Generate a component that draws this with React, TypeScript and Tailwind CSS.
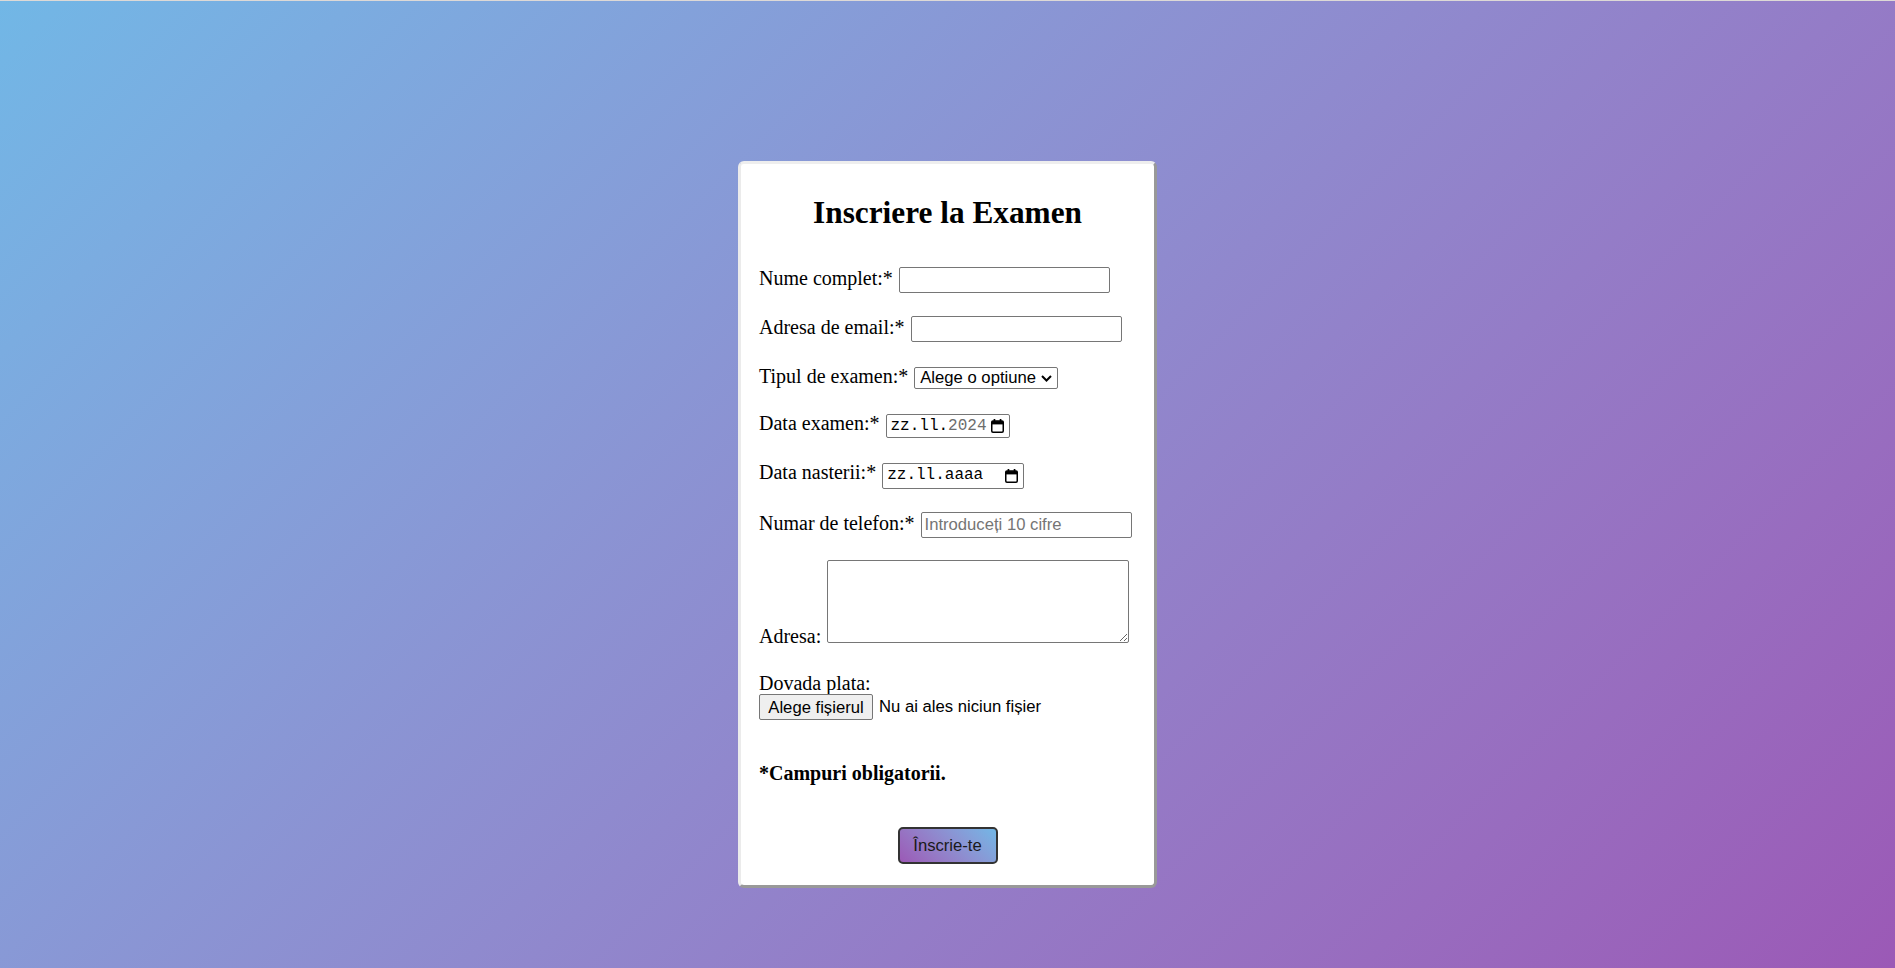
import React from "react";

function CalendarIcon() {
  return (
    <svg width="13" height="14" viewBox="0 0 13 14" className="shrink-0">
      <rect x="2.6" y="0" width="1.7" height="3" fill="#000" />
      <rect x="8.7" y="0" width="1.7" height="3" fill="#000" />
      <rect x="0.75" y="2.1" width="11.5" height="11.15" rx="1.2" fill="none" stroke="#000" strokeWidth="1.5" />
      <rect x="0.75" y="2.1" width="11.5" height="3.3" fill="#000" />
    </svg>
  );
}

function DateField({ year, width, h }: { year?: string; width: string; h: string }) {
  return (
    <div
      className={`inline-flex items-center justify-between rounded-[2px] border border-[#767676] bg-white pl-[4px] pr-[5px] ${width} ${h}`}
    >
      <span className="font-['Liberation_Mono',monospace] text-[16px] leading-[19px] text-black">
        zz.ll.
        {year ? <span className="text-[#6d6d6d]">{year}</span> : "aaaa"}
      </span>
      <CalendarIcon />
    </div>
  );
}

const inputCls =
  "h-[26px] w-[211px] rounded-[2px] border border-[#767676] bg-white px-[3px] font-['Liberation_Sans',Arial,sans-serif] text-[16.67px] text-black outline-none placeholder:text-[#757575]";

export default function App() {
  return (
    <div className="flex min-h-screen w-full justify-center border-t border-[#ddd9d6] bg-linear-135 from-[#71b7e6] to-[#9b59b6] pt-[160px]">
      <div className="h-[727px] w-[419px] rounded-[6px] border-[3px] border-t-[#eeeeee] border-r-[#999999] border-b-[#999999] border-l-[#ebebeb] bg-white px-[18px] font-['Liberation_Serif','Times_New_Roman',serif] text-[20px] text-black">
        <h2 className="mt-[31px] text-center text-[31.3px] leading-[35px] font-bold">
          Inscriere la Examen
        </h2>

        <form onSubmit={(e) => e.preventDefault()}>
          {/* Nume */}
          <div className="mt-[37px] flex items-baseline gap-[6px]">
            <label className="leading-[23px]">Nume complet:*</label>
            <input type="text" className={inputCls} />
          </div>

          {/* Email */}
          <div className="mt-[23px] flex items-baseline gap-[6px]">
            <label className="leading-[23px]">Adresa de email:*</label>
            <input type="email" className={inputCls} />
          </div>

          {/* Tip examen */}
          <div className="mt-[23px] flex items-baseline gap-[6px]">
            <label className="leading-[23px]">Tipul de examen:*</label>
            <div className="relative inline-flex">
              <select className="h-[22px] w-[144px] appearance-none rounded-[2px] border border-[#767676] bg-white pl-[5px] pr-[20px] font-['Liberation_Sans',Arial,sans-serif] text-[16.67px] leading-[19px] text-black outline-none">
                <option>Alege o optiune</option>
                <option>Scris</option>
                <option>Oral</option>
              </select>
              <svg
                width="11"
                height="7"
                viewBox="0 0 11 7"
                className="pointer-events-none absolute top-[8px] right-[6px]"
              >
                <path d="M1 1l4.5 4.5L10 1" fill="none" stroke="#000" strokeWidth="2" />
              </svg>
            </div>
          </div>

          {/* Data examen */}
          <div className="mt-[23px] flex items-baseline gap-[6px]">
            <label className="leading-[23px]">Data examen:*</label>
            <DateField year="2024" width="w-[124px]" h="h-[24px]" />
          </div>

          {/* Data nasterii */}
          <div className="mt-[23px] flex items-baseline gap-[6px]">
            <label className="leading-[23px]">Data nasterii:*</label>
            <DateField width="w-[142px]" h="h-[26px]" />
          </div>

          {/* Telefon */}
          <div className="mt-[23px] flex items-baseline gap-[6px]">
            <label className="leading-[23px]">Numar de telefon:*</label>
            <input type="tel" placeholder="Introduceți 10 cifre" className={inputCls} />
          </div>

          {/* Adresa */}
          <div className="mt-[22px] flex items-end gap-[6px]">
            <label className="-mb-[3px] leading-none">Adresa:</label>
            <textarea className="h-[83px] w-[302px] resize rounded-[2px] border border-[#767676] bg-white px-[3px] font-['Liberation_Mono',monospace] text-[16px] outline-none" />
          </div>

          {/* Dovada plata */}
          <div className="mt-[29px] leading-[23px]">Dovada plata:</div>
          <div className="-mt-px flex items-center gap-[6px] font-['Liberation_Sans',Arial,sans-serif] text-[16.67px]">
            <button
              type="button"
              className="h-[26px] w-[114px] rounded-[2px] border border-[#767676] bg-[#efefef] text-black"
            >
              Alege fișierul
            </button>
            <span>Nu ai ales niciun fișier</span>
          </div>

          <p className="mt-[42px] leading-[23px] font-bold">*Campuri obligatorii.</p>

          <div className="mt-[42px] flex justify-center">
            <button
              type="submit"
              className="h-[37px] w-[100px] rounded-[5px] border-2 border-[#333333] bg-linear-45 from-[#9b59b6] to-[#71b7e6] font-['Liberation_Sans',Arial,sans-serif] text-[16.67px] text-[#1a1a1a]"
            >
              Înscrie-te
            </button>
          </div>
        </form>
      </div>
    </div>
  );
}
